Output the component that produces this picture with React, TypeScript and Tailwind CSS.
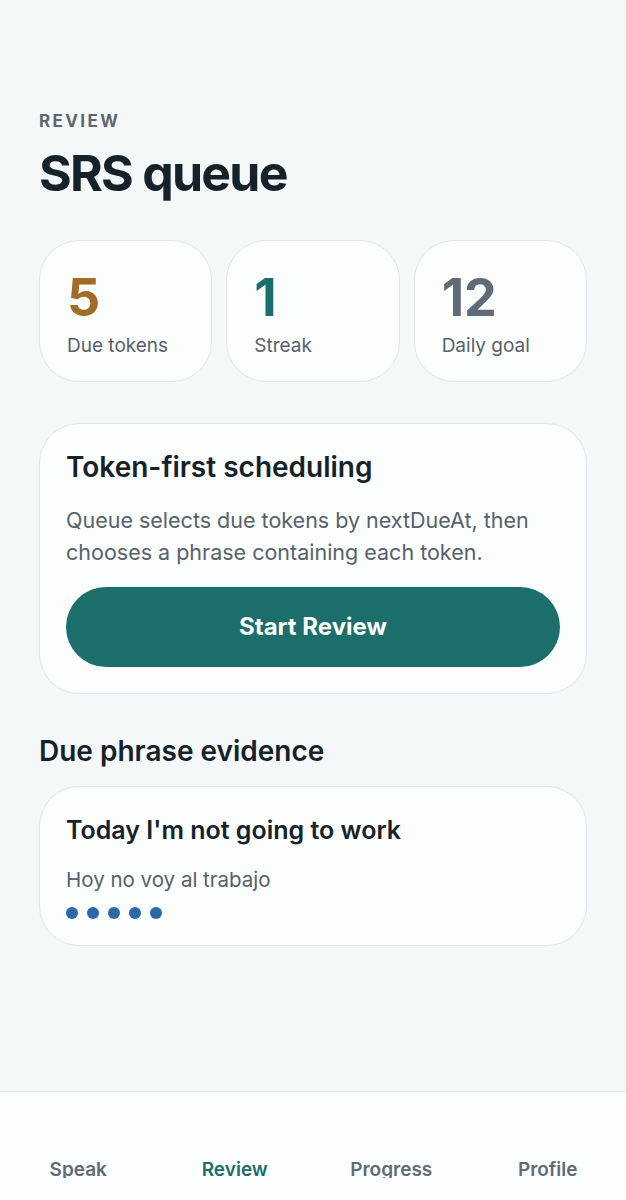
import React from "react";

function Stat({ value, label, color }: { value: string; label: string; color: string }) {
  return (
    <div className="flex-1 h-[142px] rounded-[40px] border border-[#e2e6e8] bg-[#fcfdfd] pl-[27px] pt-[29px]">
      <div className={`text-[52px] leading-[56px] font-bold ${color}`}>{value}</div>
      <div className="mt-[8px] text-[19px] leading-[24px] text-[#56616b]">{label}</div>
    </div>
  );
}

export default function App() {
  return (
    <div
      className="h-[1200px] w-[626px] flex flex-col bg-[#f5f8f9] overflow-hidden"
      style={{ fontFamily: "Inter, 'Noto Sans', sans-serif" }}
    >
      <div className="flex-1 px-[39px] pt-[110px]">
        <div className="text-[17px] leading-[22px] font-bold tracking-[0.14em] text-[#5b6670]">REVIEW</div>
        <h1 className="mt-[14px] text-[50px] leading-[54px] font-bold tracking-[-0.035em] text-[#15222a]">SRS queue</h1>

        <div className="mt-[40px] flex gap-[14px]">
          <Stat value="5" label="Due tokens" color="text-[#a16c25]" />
          <Stat value="1" label="Streak" color="text-[#1b6e69]" />
          <Stat value="12" label="Daily goal" color="text-[#5f6b75]" />
        </div>

        <div className="mt-[41px] rounded-[40px] border border-[#e2e6e8] bg-[#fcfdfd] px-[26px] pt-[25px] pb-[26px]">
          <div className="text-[28px] leading-[36px] font-semibold text-[#15222a]">Token-first scheduling</div>
          <p className="mt-[19px] text-[21.5px] leading-[32px] text-[#56616b]">
            Queue selects due tokens by nextDueAt, then chooses a phrase containing each token.
          </p>
          <button className="mt-[19px] w-full h-[80px] rounded-full bg-[#1b6e69] text-white text-[24px] font-bold">
            Start Review
          </button>
        </div>

        <div className="mt-[39px] text-[28px] leading-[36px] font-semibold text-[#15222a]">Due phrase evidence</div>

        <div className="mt-[17px] rounded-[40px] border border-[#e2e6e8] bg-[#fcfdfd] px-[26px] pt-[27px] pb-[26px]">
          <div className="text-[25px] leading-[32px] font-semibold text-[#15222a]">Today I'm not going to work</div>
          <div className="mt-[20px] text-[20.5px] leading-[28px] text-[#56616b]">Hoy no voy al trabajo</div>
          <div className="mt-[13px] flex gap-[9px]">
            {[0, 1, 2, 3, 4].map((i) => (
              <span key={i} className="block w-[12px] h-[12px] rounded-full bg-[#2c67a8]" />
            ))}
          </div>
        </div>
      </div>

      <div className="h-[109px] border-t border-[#e2e6e8] bg-[#fdfeff] grid grid-cols-4 pt-[65px]">
        {[
          { l: "Speak", a: false },
          { l: "Review", a: true },
          { l: "Progress", a: false },
          { l: "Profile", a: false },
        ].map((t) => (
          <div key={t.l} className="h-[21px] overflow-hidden flex justify-center">
            <span
              className={`text-[19px] leading-[26px] font-semibold ${t.a ? "text-[#1b6e69]" : "text-[#5f6b75]"}`}
            >
              {t.l}
            </span>
          </div>
        ))}
      </div>
    </div>
  );
}
